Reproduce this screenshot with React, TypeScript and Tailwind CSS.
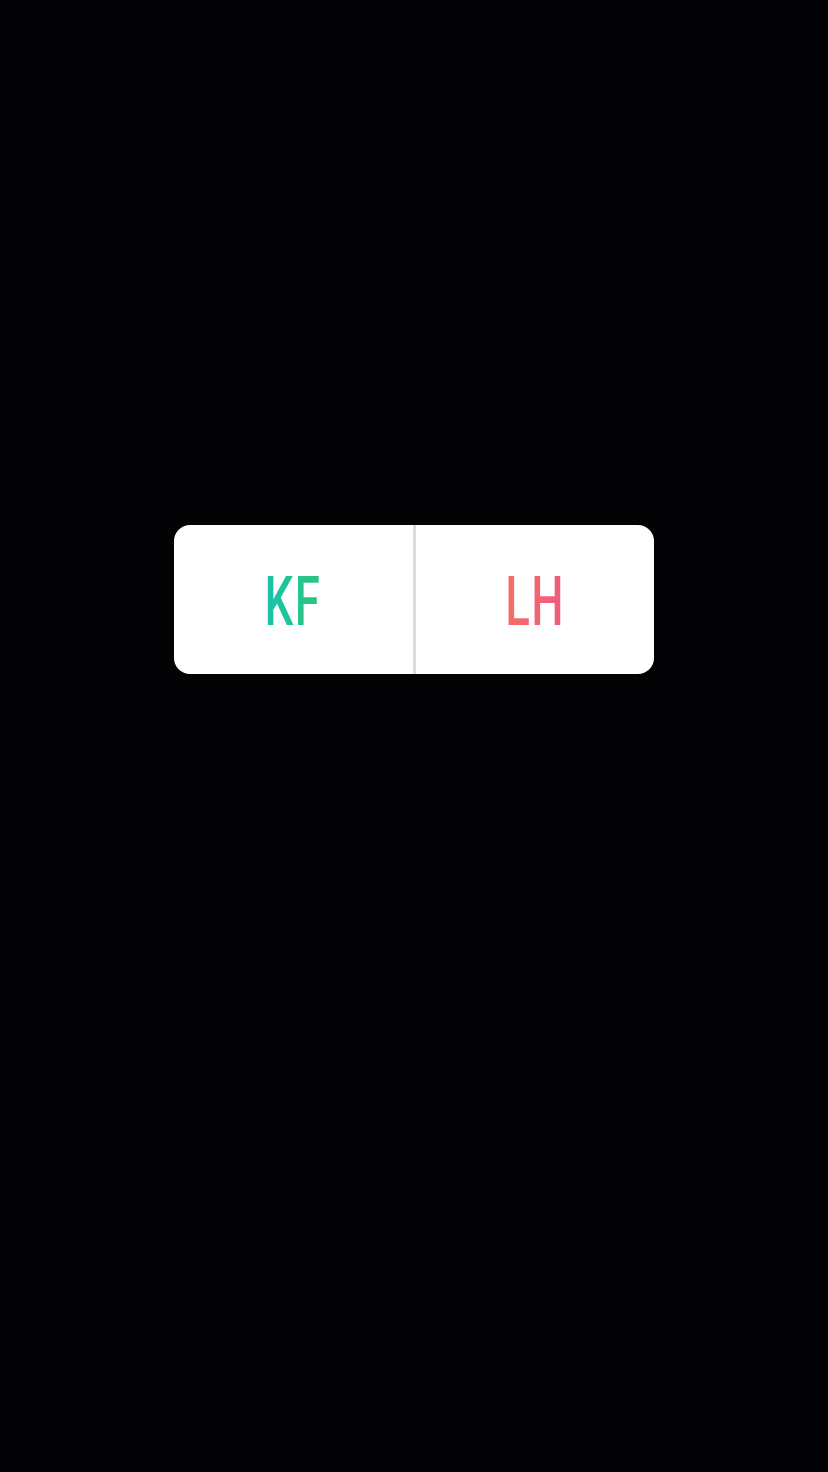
import React from "react";

const pollFont = { fontFamily: 'Roboto, "Liberation Sans", sans-serif' };

export default function App() {
  return (
    <div className="w-[828px] h-[1472px] bg-[#030305] flex flex-col items-center pt-[525px]">
      {/* Poll sticker */}
      <div className="w-[480px] h-[149px] bg-white rounded-[16px] flex overflow-hidden">
        <div className="flex-1 flex items-center justify-center">
          <span
            className="inline-block scale-x-[0.66] bg-linear-to-r from-[#17c3ad] to-[#2dc47a] bg-clip-text text-transparent text-[69px] font-medium leading-none pt-[3px] tracking-[2px]"
            style={pollFont}
          >
            KF
          </span>
        </div>
        <div className="w-[3px] bg-[#dbdbdb]" />
        <div className="flex-1 flex items-center justify-center">
          <span
            className="inline-block scale-x-[0.66] bg-linear-to-r from-[#f26f66] to-[#f2597e] bg-clip-text text-transparent text-[69px] font-medium leading-none pt-[3px] tracking-[2px]"
            style={pollFont}
          >
            LH
          </span>
        </div>
      </div>
    </div>
  );
}
